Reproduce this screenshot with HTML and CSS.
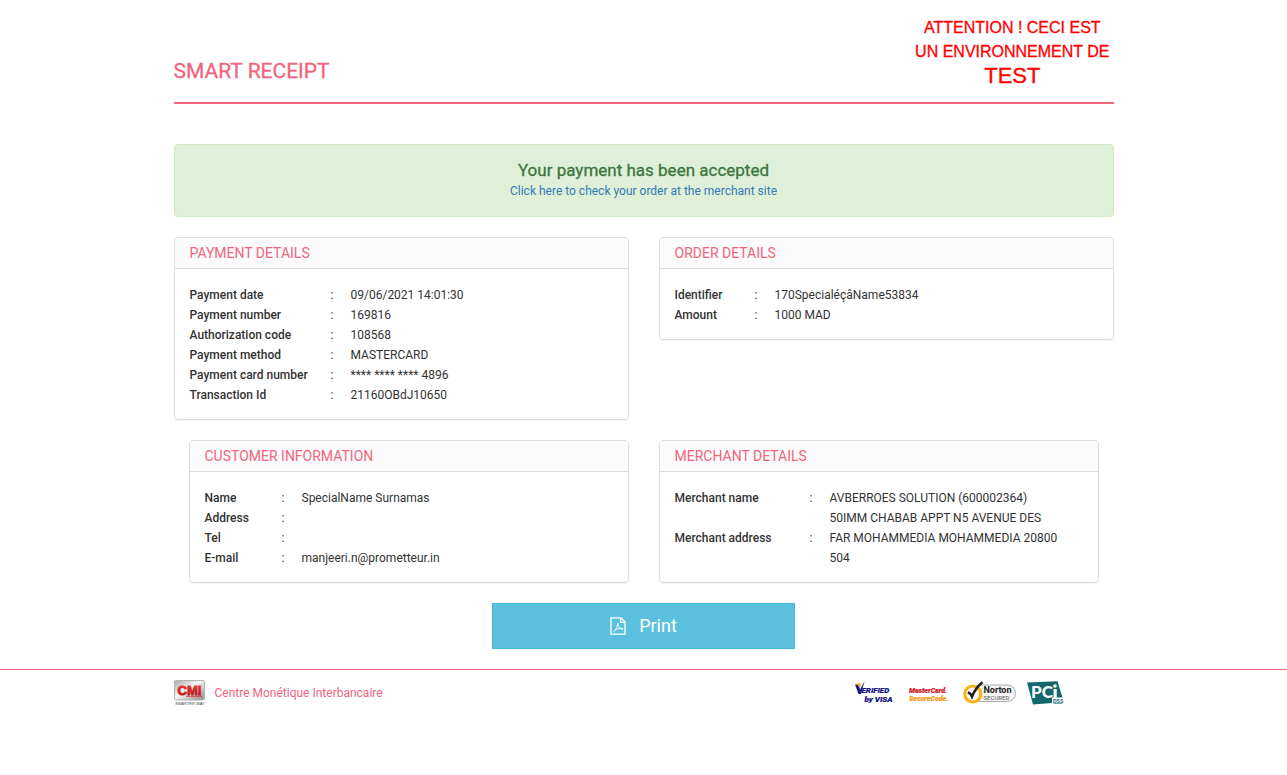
FILE: index.html
```html
<!DOCTYPE html>
<html lang="en">
<head>
<meta charset="utf-8">
<meta name="viewport" content="width=device-width, initial-scale=1">
<title>Smart Receipt</title>
<link rel="stylesheet" href="styles.css">
</head>
<body>
<div class="container">
  <header class="header">
    <h1 class="title">SMART RECEIPT</h1>
    <p class="notice">ATTENTION ! CECI EST<br>UN ENVIRONNEMENT DE<br><span class="notice-big">TEST</span></p>
  </header>
  <main>
    <div class="alert">
      <h2 class="alert-title">Your payment has been accepted</h2>
      <a class="alert-link" href="#">Click here to check your order at the merchant site</a>
    </div>
    <div class="cards">
      <section class="card">
        <h3 class="card-title">PAYMENT DETAILS</h3>
        <div class="card-body">
          <table class="details payment">
            <tr><th scope="row">Payment date</th><td class="colon">:</td><td>09/06/2021 14:01:30</td></tr>
            <tr><th scope="row">Payment number</th><td class="colon">:</td><td>169816</td></tr>
            <tr><th scope="row">Authorization code</th><td class="colon">:</td><td>108568</td></tr>
            <tr><th scope="row">Payment method</th><td class="colon">:</td><td>MASTERCARD</td></tr>
            <tr><th scope="row">Payment card number</th><td class="colon">:</td><td>**** **** **** 4896</td></tr>
            <tr><th scope="row">Transaction Id</th><td class="colon">:</td><td>21160OBdJ10650</td></tr>
          </table>
        </div>
      </section>
      <section class="card">
        <h3 class="card-title">ORDER DETAILS</h3>
        <div class="card-body">
          <table class="details order">
            <tr><th scope="row">Identifier</th><td class="colon">:</td><td>170SpecialéçâName53834</td></tr>
            <tr><th scope="row">Amount</th><td class="colon">:</td><td>1000 MAD</td></tr>
          </table>
        </div>
      </section>
    </div>
    <div class="cards cards-inset">
      <section class="card">
        <h3 class="card-title">CUSTOMER INFORMATION</h3>
        <div class="card-body">
          <table class="details customer">
            <tr><th scope="row">Name</th><td class="colon">:</td><td>SpecialName Surnamas</td></tr>
            <tr><th scope="row">Address</th><td class="colon">:</td><td></td></tr>
            <tr><th scope="row">Tel</th><td class="colon">:</td><td></td></tr>
            <tr><th scope="row">E-mail</th><td class="colon">:</td><td>manjeeri.n@prometteur.in</td></tr>
          </table>
        </div>
      </section>
      <section class="card">
        <h3 class="card-title">MERCHANT DETAILS</h3>
        <div class="card-body">
          <table class="details merchant">
            <tr><th scope="row">Merchant name</th><td class="colon">:</td><td>AVBERROES SOLUTION (600002364)</td></tr>
            <tr><th scope="row">Merchant address</th><td class="colon">:</td><td>50IMM CHABAB APPT N5 AVENUE DES FAR MOHAMMEDIA MOHAMMEDIA 20800 504</td></tr>
          </table>
        </div>
      </section>
    </div>
    <div class="actions">
      <button class="print" type="button">
        <svg width="16" height="18" viewBox="0 0 16 18" fill="none" stroke="#fff" aria-hidden="true">
          <path d="M1 .8h10l4 4v12.400H1z" stroke-width="1.300"/>
          <path d="M10.700 1v4.300H15" stroke-width="1.200"/>
          <path d="M3.300 15c1.500-.5 4.200-5 4.200-8 0-1.400.9-1.100.7.200-.3 2.600 2 5.100 4.300 5.100 1 0 .8-.9-.6-.9-2.500 0-5 .6-7 1.700" stroke-width=".9"/>
        </svg>
        <span>Print</span>
      </button>
    </div>
  </main>
</div>
<footer class="footer">
  <div class="container footer-row">
    <svg width="31" height="26" viewBox="0 0 31 26" role="img" aria-label="CMI">
      <defs>
        <linearGradient id="silver" x1="0" y1="0" x2="1" y2="1"><stop offset="0" stop-color="#aaa"/><stop offset=".45" stop-color="#f7f7f7"/><stop offset="1" stop-color="#8a8a8a"/></linearGradient>
        <linearGradient id="red" x1="0" y1="0" x2="0" y2="1"><stop offset="0" stop-color="#e9453c"/><stop offset="1" stop-color="#b80e15"/></linearGradient>
      </defs>
      <rect x=".5" y=".5" width="30" height="19.500" rx="1.500" fill="url(#silver)" stroke="#b5b5b5"/>
      <text x="15.500" y="14.500" text-anchor="middle" class="logo-cmi" fill="url(#red)" stroke="url(#red)">CMI</text>
      <path d="M12 16.300h16" stroke="#d3222a" stroke-width=".8"/>
      <text x="16" y="25" text-anchor="middle" class="logo-tag">SMARTER WAY</text>
    </svg>
    <span class="company">Centre Monétique Interbancaire</span>
    <div class="badges">
      <svg width="40" height="24" viewBox="0 0 40 24" role="img" aria-label="Verified by VISA">
        <path d="M1 3.500h3.500l1.500 5L10.500 .5 7 13H4.500z" fill="#16167f"/>
        <path d="M2 2.500h5.500l-1.700 4z" fill="#f5a81c"/>
        <text x="7.500" y="12" class="logo-visa">ERIFIED</text>
        <text x="10.500" y="21" class="logo-visa">by VISA</text>
      </svg>
      <svg class="badge-mc" width="40" height="24" viewBox="0 0 40 24" role="img" aria-label="MasterCard SecureCode">
        <text x="0" y="12" class="logo-mc" fill="#d0202a" stroke="#d0202a">MasterCard.</text>
        <text x="0" y="20" class="logo-mc" fill="#f59a1a" stroke="#f59a1a">SecureCode.</text>
      </svg>
      <svg class="badge-norton" width="54" height="24" viewBox="0 0 54 24" role="img" aria-label="Norton Secured">
        <rect x="9" y="4" width="43.500" height="16.500" rx="8" fill="#f5f5f5" stroke="#999" stroke-width=".8"/>
        <circle cx="9.800" cy="13" r="8" fill="#fff" stroke="#fbb41a" stroke-width="3.200"/>
        <path d="M4.800 11.500c2 .5 3.300 2 4.200 4C11.500 9.500 14.500 5 19.500 1.200" fill="none" stroke="#222" stroke-width="2.700"/>
        <text x="20.500" y="12" class="logo-norton">Norton</text>
        <text x="20.500" y="18.500" class="logo-secured">SECURED</text>
      </svg>
      <svg class="badge-pci" width="37" height="24" viewBox="0 0 37 24" role="img" aria-label="PCI DSS">
        <path d="M0 1.500 30.500 .2 35.500 16.500H25V22L6 23.500z" fill="#12686c"/>
        <text x="4" y="17" class="logo-pci">PC</text>
        <path d="M26.500 8h3.200v9h-3.200z" fill="#fff"/><circle cx="28" cy="5" r="1.800" fill="#fff"/>
        <text x="26" y="21.500" class="logo-dss">DSS</text>
        <path d="M26.500 22.500h9" stroke="#6fa5a8"/>
      </svg>
    </div>
  </div>
</footer>
</body>
</html>
```
FILE: styles.css
```css
* { box-sizing: border-box; }
body {
  margin: 0;
  background: #fff;
  color: #333;
  font: 12px/20px Roboto, sans-serif;
}
h1, h2, h3, p { margin: 0; }
.container {
  max-width: 970px;
  margin: 0 auto;
  padding: 0 15px;
}
.header {
  display: flex;
  justify-content: space-between;
  align-items: flex-end;
  padding: 16px 4px 12px 0;
  border-bottom: 2px solid #f0657d;
}
.title {
  padding-bottom: 7px;
  color: #f0657d;
  font-size: 21px;
  line-height: 24px;
  font-weight: 400;
  -webkit-text-stroke: 0.3px #f0657d;
}
.notice {
  color: #f00;
  font: 16px/24px "Liberation Sans", Arial, sans-serif;
  text-align: center;
  -webkit-text-stroke: 0.3px #f00;
}
.notice-big { font-size: 22px; }
.alert {
  margin: 40px 0 20px;
  padding: 15px;
  border: 1px solid #d0e9c0;
  border-radius: 4px;
  background: #dff0d8;
  text-align: center;
}
.alert-title {
  padding-bottom: 1px;
  color: #3c763d;
  font-size: 17px;
  line-height: 20px;
  font-weight: 400;
  -webkit-text-stroke: 0.3px #3c763d;
}
.alert-link {
  color: #337ab7;
  text-decoration: none;
}
.cards {
  display: grid;
  grid-template-columns: 1fr 1fr;
  align-items: start;
  gap: 30px;
  margin-bottom: 20px;
}
.cards-inset { padding: 0 15px; }
.card {
  border: 1px solid #ddd;
  border-radius: 4px;
  box-shadow: 0 1px 1px rgba(0, 0, 0, .05);
}
.card-title {
  padding: 5px 15px;
  border-bottom: 1px solid #ddd;
  border-radius: 3px 3px 0 0;
  background: #fbfbfb;
  color: #f0657d;
  font-size: 14px;
  line-height: 20px;
  font-weight: 400;
}
.card-body { padding: 16px 15px 14px; }
.details {
  width: 100%;
  border-collapse: collapse;
  table-layout: fixed;
}
.details th, .details td {
  padding: 0;
  vertical-align: middle;
  text-align: left;
}
.details th { font-weight: 500; }
.details .colon { width: 20px; }
.details td { height: 20px; }
.payment th { width: 141px; }
.order th { width: 80px; }
.customer th { width: 77px; }
.merchant th { width: 135px; }
.merchant td:last-child { padding-right: 20px; }
.actions {
  display: flex;
  justify-content: center;
  padding: 0 15px;
}
.print {
  display: flex;
  justify-content: center;
  align-items: center;
  gap: 13px;
  width: 33.333%;
  padding: 10px 16px;
  border: 1px solid #46b8da;
  background: #5bc0de;
  color: #fff;
  font: 18px/24px Roboto, sans-serif;
  cursor: pointer;
}
.footer {
  margin-top: 20px;
  border-top: 1px solid #f0657d;
}
.footer-row {
  display: flex;
  align-items: center;
  padding-top: 10px;
}
.company {
  margin-left: 10px;
  color: #f0657d;
}
.badges {
  display: flex;
  align-items: center;
  margin-left: auto;
  margin-right: 50px;
}
.badge-mc { margin-left: 15px; }
.badge-norton { margin-left: 14px; }
.badge-pci { margin-left: 10px; }
.logo-cmi { font: 900 13px "Liberation Sans", sans-serif; stroke-width: .9; }
.logo-tag { font: italic 4px "Liberation Sans", sans-serif; fill: #444; }
.logo-visa { font: italic 900 8px Roboto, sans-serif; fill: #16167f; stroke: #16167f; stroke-width: .2; }
.logo-mc { font: italic 900 7px Roboto, sans-serif; stroke-width: .2; }
.logo-norton { font: bold 9px Roboto, sans-serif; fill: #222; }
.logo-secured { font: 6px Roboto, sans-serif; fill: #555; }
.logo-pci { font: 900 17px Lato, sans-serif; fill: #fff; }
.logo-dss { font: bold 5px "Liberation Sans", sans-serif; fill: #12686c; }
```
